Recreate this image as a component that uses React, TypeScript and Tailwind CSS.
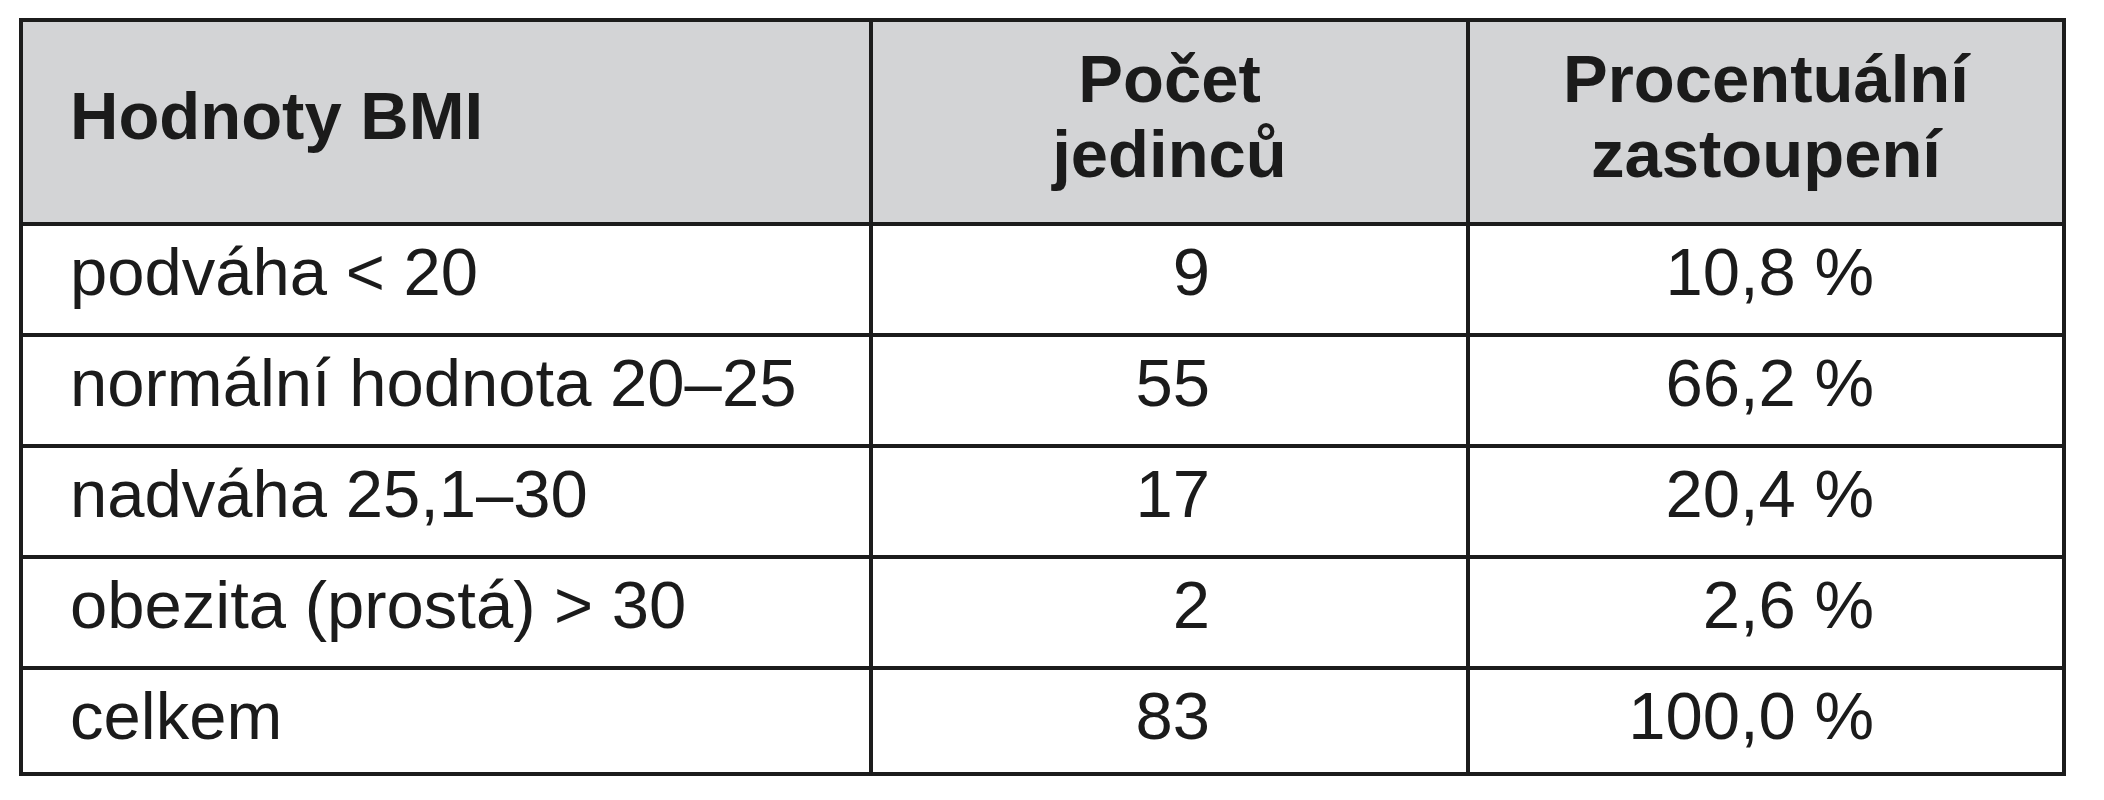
import React from "react";

const rows: { label: string; count: string; pct: string; h: string }[] = [
  { label: "podváha < 20", count: "9", pct: "10,8 %", h: "h-[111px]" },
  { label: "normální hodnota 20–25", count: "55", pct: "66,2 %", h: "h-[111px]" },
  { label: "nadváha 25,1–30", count: "17", pct: "20,4 %", h: "h-[111px]" },
  { label: "obezita (prostá) > 30", count: "2", pct: "2,6 %", h: "h-[111px]" },
  { label: "celkem", count: "83", pct: "100,0 %", h: "h-[102px]" },
];

export default function App() {
  return (
    <div className="w-[2104px] h-[800px] bg-white pt-[18px] pl-[19px] text-[#1b1b1b] font-['Liberation_Sans',Arial,sans-serif]">
      <div className="w-[2047px] border-4 border-[#1c1c1c] flex flex-col">
        {/* header */}
        <div className="flex h-[204px] border-b-4 border-[#1c1c1c] bg-[#d3d4d6] font-bold text-[67px] leading-[75px]">
          <div className="w-[850px] border-r-4 border-[#1c1c1c] flex items-center pl-[47px] pb-[13px]">
            Hodnoty BMI
          </div>
          <div className="w-[597px] border-r-4 border-[#1c1c1c] flex items-center justify-center text-center pb-[13px]">
            <div>
              Počet
              <br />
              jedinců
            </div>
          </div>
          <div className="w-[592px] flex items-center justify-center text-center pb-[13px]">
            <div>
              Procentuální
              <br />
              zastoupení
            </div>
          </div>
        </div>
        {rows.map((r, i) => (
          <div
            key={r.label}
            className={`flex ${r.h} text-[67px] leading-[67px] ${
              i < rows.length - 1 ? "border-b-4 border-[#1c1c1c]" : ""
            }`}
          >
            <div className="w-[850px] border-r-4 border-[#1c1c1c] pl-[47px] pt-[12px] whitespace-nowrap">
              {r.label}
            </div>
            <div className="w-[597px] border-r-4 border-[#1c1c1c] pr-[256px] pt-[12px] text-right whitespace-nowrap">
              {r.count}
            </div>
            <div className="w-[592px] pr-[188px] pt-[12px] text-right whitespace-nowrap">
              {r.pct}
            </div>
          </div>
        ))}
      </div>
    </div>
  );
}
